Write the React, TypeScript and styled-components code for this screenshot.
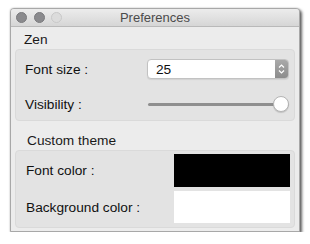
import React from 'react'
import styled, { createGlobalStyle } from 'styled-components'

const GlobalStyle = createGlobalStyle`
  html, body {
    margin: 0;
    padding: 0;
    background: #ffffff;
  }
  body {
    font-family: "Liberation Sans", Arial, sans-serif;
    font-size: 13.7px;
    color: #111111;
  }
`

const Window = styled.div`
  width: 290px;
  height: 224px;
  margin: 8px 0 0 10px;
  background: #ececec;
  border: 1px solid #a8a8a8;
  box-sizing: border-box;
  border-radius: 4px 4px 0 0;
  box-shadow: 2px 2px 3px rgba(0, 0, 0, 0.6), 0 0 2px rgba(0, 0, 0, 0.25);
  display: flex;
  flex-direction: column;
  overflow: hidden;
`

const TitleBar = styled.div`
  height: 17px;
  flex: none;
  position: relative;
  display: flex;
  align-items: center;
  justify-content: center;
  background: linear-gradient(#ececec, #d6d6d6);
  border-bottom: 1px solid #b9b9b9;
  color: #4b4b4b;
  font-size: 13px;
`

const Lights = styled.div`
  position: absolute;
  left: 5px;
  top: 3px;
  display: flex;
  gap: 6.5px;
`

const Light = styled.span<{ $off?: boolean }>`
  width: 11px;
  height: 11px;
  border-radius: 50%;
  box-sizing: border-box;
  background: ${({ $off }) => ($off ? '#dcdcdc' : '#8a8a8d')};
  border: 1px solid ${({ $off }) => ($off ? '#c8c8c8' : '#7a7a7d')};
`

const Body = styled.div`
  padding: 0 4px;
  display: flex;
  flex-direction: column;
`

const SectionLabel = styled.div<{ $height: number; $indent: number }>`
  height: ${({ $height }) => $height}px;
  display: flex;
  align-items: flex-end;
  padding: 0 0 2px ${({ $indent }) => $indent}px;
  box-sizing: border-box;
  color: #1a1a1a;
`

const Group = styled.div`
  background: #e3e3e3;
  border: 1px solid #dadada;
  border-radius: 4px;
  box-sizing: border-box;
  display: grid;
  grid-template-columns: 1fr auto;
  align-items: center;
`

const ZenGroup = styled(Group)`
  height: 72px;
  padding: 9px 5px 8px 9px;
  grid-template-rows: 20px 16px;
  row-gap: 17px;
`

const ThemeGroup = styled(Group)`
  height: 78px;
  padding: 3px 4px 4px 10px;
  grid-template-rows: 33px 32px;
  row-gap: 4px;
`

const Label = styled.div`
  color: #111111;
`

const Combo = styled.div`
  width: 142px;
  height: 20px;
  box-sizing: border-box;
  background: #ffffff;
  border: 1px solid #c2c2c2;
  border-radius: 4px;
  box-shadow: 0 1px 1px rgba(0, 0, 0, 0.08);
  display: flex;
  align-items: center;
  overflow: hidden;
`

const ComboText = styled.span`
  flex: 1;
  padding-left: 8px;
  color: #111;
`

const Stepper = styled.div`
  width: 13px;
  height: 100%;
  background: linear-gradient(#a9a9a9, #8c8c8c);
  display: flex;
  align-items: center;
  justify-content: center;
`

const Slider = styled.div`
  width: 142px;
  height: 16px;
  position: relative;
  display: flex;
  align-items: center;
`

const Track = styled.div`
  flex: 1;
  height: 3px;
  margin-left: 1px;
  border-radius: 2px;
  background: #8f8f8f;
`

const Knob = styled.div`
  position: absolute;
  right: 0;
  top: 0;
  width: 16px;
  height: 16px;
  border-radius: 50%;
  background: #ffffff;
  box-sizing: border-box;
  border: 1px solid #b4b4b4;
  box-shadow: 0 1px 1px rgba(0, 0, 0, 0.15);
`

const Swatch = styled.div<{ $color: string }>`
  width: 116px;
  height: 100%;
  background: ${({ $color }) => $color};
`

function StepperIcon() {
  return (
    <svg width="7" height="12" viewBox="0 0 7 12">
      <path d="M1 4.5 L3.5 2 L6 4.5" fill="none" stroke="#fff" strokeWidth="1.2" />
      <path d="M1 7.5 L3.5 10 L6 7.5" fill="none" stroke="#fff" strokeWidth="1.2" />
    </svg>
  )
}

export default function App() {
  return (
    <>
      <GlobalStyle />
      <Window>
        <TitleBar>
          <Lights>
            <Light />
            <Light />
            <Light $off />
          </Lights>
          Preferences
        </TitleBar>
        <Body>
          <SectionLabel $height={22} $indent={9}>Zen</SectionLabel>
          <ZenGroup>
            <Label>Font size :</Label>
            <Combo>
              <ComboText>25</ComboText>
              <Stepper>
                <StepperIcon />
              </Stepper>
            </Combo>
            <Label>Visibility :</Label>
            <Slider>
              <Track />
              <Knob />
            </Slider>
          </ZenGroup>
          <SectionLabel $height={29} $indent={12}>Custom theme</SectionLabel>
          <ThemeGroup>
            <Label>Font color :</Label>
            <Swatch $color="#000000" />
            <Label>Background color :</Label>
            <Swatch $color="#ffffff" />
          </ThemeGroup>
        </Body>
      </Window>
    </>
  )
}
